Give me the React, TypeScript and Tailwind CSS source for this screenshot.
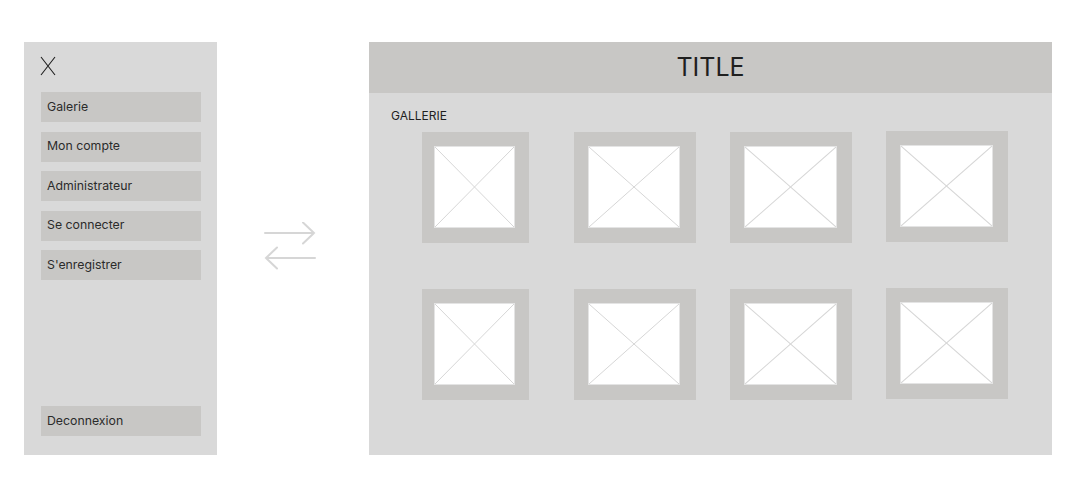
const menu = ['Galerie', 'Mon compte', 'Administrateur', 'Se connecter', "S'enregistrer"];

// frame sizes / inner padding read off the wireframe
const row = [
  { w: 'w-[107px]', pad: 'pl-[12px] pr-[14px]', ml: 'ml-0', inner: 'w-[81px]' },
  { w: 'w-[122px]', pad: 'pl-[14px] pr-[16px]', ml: 'ml-[45px]', inner: 'w-[92px]' },
  { w: 'w-[122px]', pad: 'pl-[14px] pr-[15px]', ml: 'ml-[34px]', inner: 'w-[93px]' },
  { w: 'w-[122px]', pad: 'pl-[14px] pr-[15px]', ml: 'ml-[34px]', inner: 'w-[93px]' },
];

const Placeholder = ({ className }: { className: string }) => (
  <div className={`h-[82px] bg-white border border-[#e4e4e4] ${className}`}>
    <svg width="100%" height="100%" viewBox="0 0 100 100" preserveAspectRatio="none">
      <line x1="0" y1="0" x2="100" y2="100" stroke="#d6d6d6" strokeWidth="1" vectorEffect="non-scaling-stroke" />
      <line x1="100" y1="0" x2="0" y2="100" stroke="#d6d6d6" strokeWidth="1" vectorEffect="non-scaling-stroke" />
    </svg>
  </div>
);

const GalleryRow = () => (
  <div className="flex items-start">
    {row.map((f, i) => (
      <div
        key={i}
        className={`${f.w} ${f.pad} ${f.ml} ${i === 3 ? '-mt-px' : ''} h-[111px] pt-[14px] bg-[#c8c7c5]`}
      >
        <Placeholder className={f.inner} />
      </div>
    ))}
  </div>
);

const SwapArrows = () => (
  <svg width="52" height="50" viewBox="0 0 52 50" fill="none" stroke="#d6d6d6" strokeWidth="2" strokeLinecap="round">
    <path d="M1 11 H50 M39 0.5 L50 11 L39 21.5" />
    <path d="M51 36 H2 M13 25.5 L2 36 L13 46.5" />
  </svg>
);

const itemCls = 'ml-px w-[160px] h-[30px] bg-[#c8c7c5] flex items-center pl-[6px] text-[12.3px] text-[#2b2b2b]';

export default function App() {
  return (
    <div
      className="w-[1077px] h-[503px] bg-white flex items-start pt-[42px] pl-[24px]"
      style={{ fontFamily: 'Inter, "Noto Sans", sans-serif' }}
    >
      {/* ── Sidebar ── */}
      <aside className="w-[193px] h-[413px] bg-[#d9d9d9] flex flex-col pl-[16px] pb-[19px] pt-[14px]">
        <svg width="16" height="20" viewBox="0 0 16 20" className="shrink-0">
          <path d="M1 1 L15 19 M15 1 L1 19" stroke="#1f1f1f" strokeWidth="1.1" fill="none" />
        </svg>
        <nav className="mt-[16px] flex flex-col gap-[9.5px]">
          {menu.map((m) => (
            <div key={m} className={itemCls}>
              {m}
            </div>
          ))}
        </nav>
        <div className={`mt-auto ${itemCls}`}>Deconnexion</div>
      </aside>

      {/* ── swap arrows ── */}
      <div className="ml-[47px] mt-[180px]">
        <SwapArrows />
      </div>

      {/* ── Main panel ── */}
      <main className="ml-[53px] w-[683px] h-[413px] bg-[#d9d9d9] flex flex-col">
        <header className="h-[51px] bg-[#c8c7c5] flex items-center justify-center text-[25px] text-[#1f1f1f]">
          TITLE
        </header>
        <div className="pl-[22px] pt-[15px] text-[12px] text-[#1f1f1f] leading-[15px]">GALLERIE</div>
        <div className="pl-[53px] pt-[9px] flex flex-col gap-[46px]">
          <GalleryRow />
          <GalleryRow />
        </div>
      </main>
    </div>
  );
}
